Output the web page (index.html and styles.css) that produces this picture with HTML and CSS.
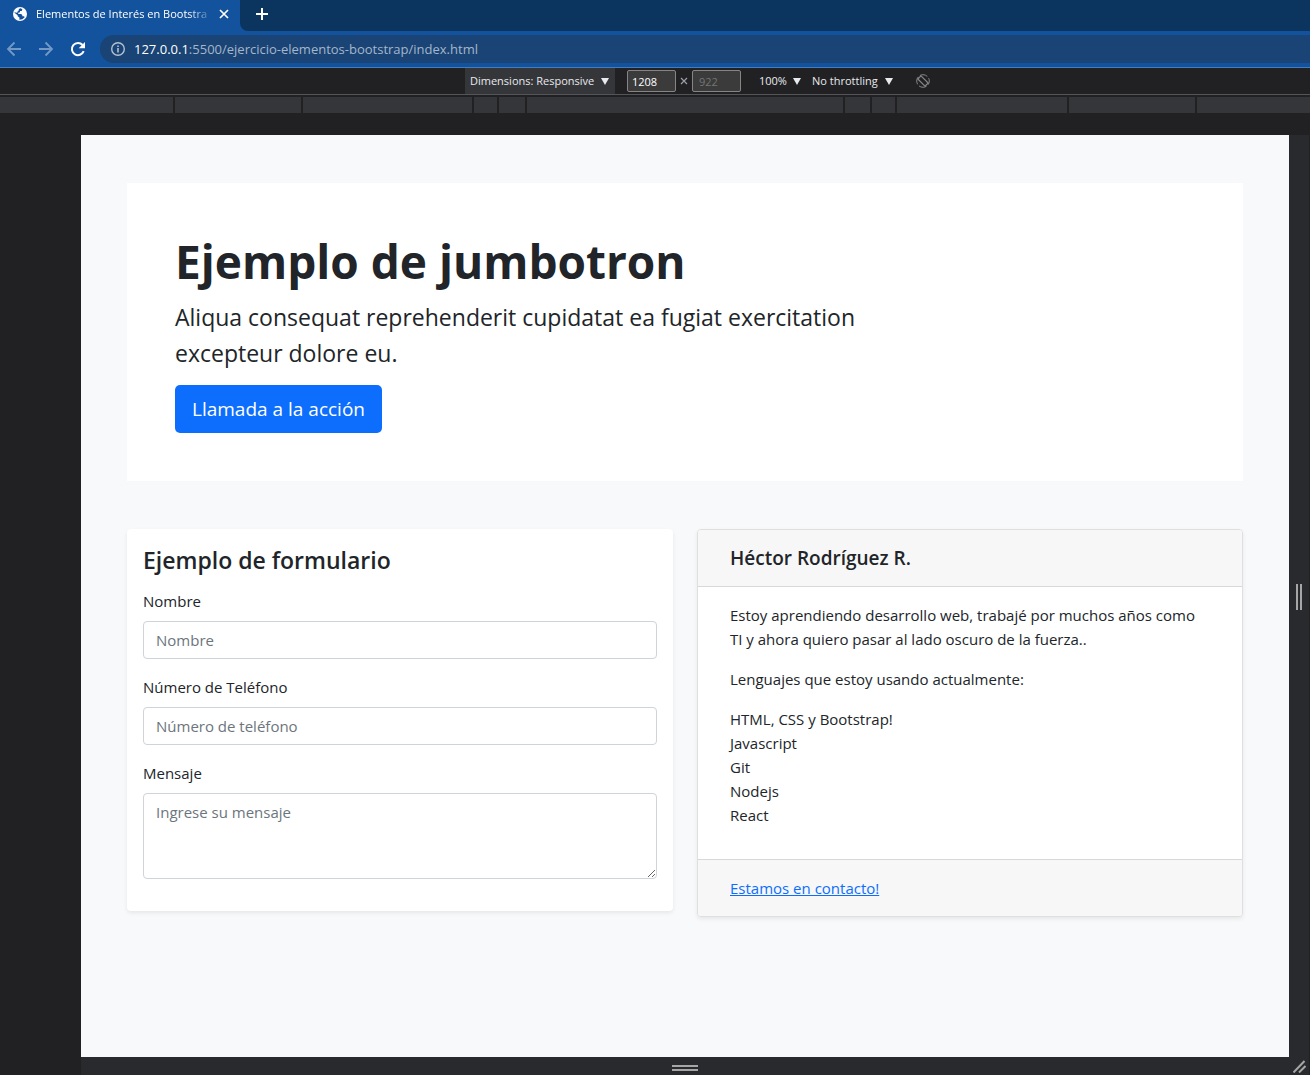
FILE: index.html
```html
<!DOCTYPE html>
<html lang="es">
<head>
  <meta charset="utf-8">
  <meta name="viewport" content="width=device-width, initial-scale=1">
  <title>Elementos de Interés en Bootstrap</title>
  <link rel="stylesheet" href="styles.css">
</head>
<body>
  <header class="browser">
    <div class="tabstrip">
      <div class="tab">
        <svg class="tab-icon" viewBox="0 0 24 24" aria-hidden="true"><circle cx="12" cy="12" r="12" fill="#fff"/><path d="M10 3.500 13 2 16 4 15 7 12 7 12 9 9 10 9 12 14 12 16 14 16 16 19 16 20 17.500 16 21 11 22 11 18 8 16 8 14 2.500 10 3 9 6 10 8 9 8 7 10 6Z" fill="#13529c"/></svg>
        <span class="tab-title">Elementos de Interés en Bootstra</span>
        <button class="icon-button tab-close" type="button" aria-label="Cerrar">
          <svg width="10" height="10" viewBox="0 0 10 10"><path d="M1 1 9 9M9 1 1 9" stroke="#fff" stroke-width="1.700"/></svg>
        </button>
      </div>
      <div class="strip">
        <button class="icon-button" type="button" aria-label="Nueva pestaña">
          <svg width="12" height="12" viewBox="0 0 12 12"><path d="M6 0V12M0 6H12" stroke="#fff" stroke-width="2"/></svg>
        </button>
      </div>
    </div>
    <div class="toolbar">
      <nav class="nav-buttons">
        <button class="icon-button" type="button" aria-label="Atrás">
          <svg width="16" height="16" viewBox="0 0 16 16"><path d="M15 8H2M8.500 1.500 2 8l6.500 6.500" fill="none" stroke="#739ac7" stroke-width="1.800"/></svg>
        </button>
        <button class="icon-button" type="button" aria-label="Adelante">
          <svg width="16" height="16" viewBox="0 0 16 16"><path d="M1 8H14M7.500 1.500 14 8l-6.500 6.500" fill="none" stroke="#739ac7" stroke-width="1.800"/></svg>
        </button>
        <button class="icon-button" type="button" aria-label="Recargar">
          <svg width="16" height="16" viewBox="0 0 16 16"><path d="M13.700 10.200A6.100 6.100 0 1 1 12.600 4" fill="none" stroke="#fff" stroke-width="2"/><path d="M15 1V7.300H8.700Z" fill="#fff"/></svg>
        </button>
      </nav>
      <div class="omnibox">
        <svg width="14" height="14" viewBox="0 0 14 14" aria-hidden="true"><circle cx="7" cy="7" r="6.300" fill="none" stroke="#b4c1d1" stroke-width="1.400"/><path d="M7 6V10.500M7 3.400V5" stroke="#b4c1d1" stroke-width="1.600"/></svg>
        <span class="url"><span class="host">127.0.0.1</span>:5500/ejercicio-elementos-bootstrap/index.html</span>
      </div>
    </div>
  </header>

  <div class="device-bar">
    <label class="picker picker-active"><select class="dimensions" aria-label="Dimensiones"><option>Dimensions: Responsive</option></select></label>
    <div class="size">
      <input class="size-input" type="text" value="1208" aria-label="Ancho">
      <svg width="8" height="8" viewBox="0 0 8 8" aria-hidden="true"><path d="M1 1 7 7M7 1 1 7" stroke="#9aa0a6" stroke-width="1.200"/></svg>
      <input class="size-input" type="text" value="922" aria-label="Alto" disabled>
    </div>
    <label class="picker"><select class="zoom" aria-label="Zoom"><option>100%</option></select></label>
    <label class="picker"><select class="throttle" aria-label="Red"><option>No throttling</option></select></label>
    <button class="icon-button rotate" type="button" aria-label="Girar">
      <svg width="14" height="14" viewBox="0 0 14 14"><g fill="none" stroke="#85868a"><circle cx="7" cy="7" r="6.300" stroke-dasharray="7.900 2" stroke-dashoffset="4"/><path d="M5 1.800 12.200 9 9 12.200 1.800 5Z" stroke-width="1.200"/></g></svg>
    </button>
  </div>

  <div class="ruler"><i></i><i></i><i></i><i></i><i></i><i></i><i></i><i></i><i></i><i></i><i></i></div>

  <div class="stage">
    <div class="viewport">
      <main class="container">
        <section class="jumbotron">
          <h1 class="jumbotron-title">Ejemplo de jumbotron</h1>
          <p class="jumbotron-text">Aliqua consequat reprehenderit cupidatat ea fugiat exercitation excepteur dolore eu.</p>
          <button class="cta" type="button">Llamada a la acción</button>
        </section>
        <div class="row">
          <form class="form-card">
            <h2 class="form-title">Ejemplo de formulario</h2>
            <div class="field">
              <label for="nombre">Nombre</label>
              <input class="control" id="nombre" type="text" placeholder="Nombre">
            </div>
            <div class="field">
              <label for="telefono">Número de Teléfono</label>
              <input class="control" id="telefono" type="tel" placeholder="Número de teléfono">
            </div>
            <div class="field">
              <label for="mensaje">Mensaje</label>
              <textarea class="control" id="mensaje" rows="3" placeholder="Ingrese su mensaje"></textarea>
            </div>
          </form>
          <article class="card">
            <h2 class="card-header">Héctor Rodríguez R.</h2>
            <div class="card-body">
              <p>Estoy aprendiendo desarrollo web, trabajé por muchos años como TI y ahora quiero pasar al lado oscuro de la fuerza..</p>
              <p>Lenguajes que estoy usando actualmente:</p>
              <ul>
                <li>HTML, CSS y Bootstrap!</li>
                <li>Javascript</li>
                <li>Git</li>
                <li>Nodejs</li>
                <li>React</li>
              </ul>
            </div>
            <footer class="card-footer"><a href="#">Estamos en contacto!</a></footer>
          </article>
        </div>
      </main>
    </div>
    <div class="handle handle-right"><svg width="6" height="26" viewBox="0 0 6 26"><path d="M1 0V26M5 0V26" stroke="#a5a6a5" stroke-width="2"/></svg></div>
    <div class="handle handle-bottom"><svg width="26" height="6" viewBox="0 0 26 6"><path d="M0 1H26M0 5H26" stroke="#a5a6a5" stroke-width="2"/></svg></div>
    <div class="handle handle-corner"><svg width="13" height="13" viewBox="0 0 13 13"><path d="M.5 12.500 11.500 1M6 12.500 12.500 6" stroke="#a5a6a5" stroke-width="2"/></svg></div>
  </div>
</body>
</html>
```
FILE: styles.css
```css
*, *::before, *::after {
  box-sizing: border-box;
}

body {
  display: flex;
  flex-direction: column;
  min-height: 100vh;
  margin: 0;
  background: #212123;
  color: #212529;
  font: 15px/24px "Open Sans", "Noto Sans", sans-serif;
}

h1, h2, p, ul {
  margin: 0;
}

button, input, select, textarea {
  font: inherit;
}

.icon-button {
  display: flex;
  align-items: center;
  justify-content: center;
  padding: 0;
  border: 0;
  background: none;
}

/* Browser window */
.browser {
  background: #13529c;
  border-bottom: 1px solid #457cba;
  color: #fff;
}

.tabstrip {
  display: flex;
  height: 31px;
  background: #13529c;
}

.tab {
  display: flex;
  align-items: center;
  width: 240px;
  padding: 0 10px 3px 13px;
  border-radius: 8px 8px 0 0;
}

.tab-icon {
  flex: none;
  width: 14px;
  height: 14px;
  margin-right: 9px;
}

.tab-title {
  flex: 1;
  font-size: 11px;
  white-space: nowrap;
  -webkit-mask-image: linear-gradient(to right, #000 152px, transparent 178px);
  mask-image: linear-gradient(to right, #000 152px, transparent 178px);
}

.tab-close {
  width: 12px;
  margin-left: 6px;
}

.strip {
  display: flex;
  flex: 1;
  align-items: center;
  padding: 0 16px 3px;
  border-bottom-left-radius: 8px;
  background: #0b355f;
}

.toolbar {
  display: flex;
  align-items: center;
  height: 36px;
}

.nav-buttons {
  display: flex;
  gap: 16px;
  padding: 0 14px 0 6px;
}

.omnibox {
  display: flex;
  flex: 1;
  align-items: center;
  gap: 9px;
  height: 28px;
  padding-left: 11px;
  border-radius: 14px 0 0 14px;
  background: #194475;
  color: #a6b6ca;
  font-size: 13px;
}

.host {
  color: #fff;
}

/* Device toolbar */
.device-bar {
  display: flex;
  align-items: center;
  justify-content: center;
  height: 27px;
  padding-left: 85px;
  border-bottom: 1px solid #545558;
  color: #e8eaed;
  font-size: 11px;
  line-height: 16px;
}

.picker {
  position: relative;
  display: flex;
  align-items: center;
  height: 26px;
}

.picker::after {
  position: absolute;
  right: 6px;
  border: 4px solid transparent;
  border-top: 7px solid #e8eaed;
  border-bottom: 0;
  content: "";
  pointer-events: none;
}

.picker-active {
  background: #35363a;
}

.picker select {
  height: 26px;
  padding: 0 5px;
  border: 0;
  background: none;
  color: inherit;
  appearance: none;
}

.dimensions {
  width: 150px;
}

.zoom {
  width: 53px;
}

.throttle {
  width: 92px;
}

.size {
  display: flex;
  align-items: center;
  gap: 4px;
  margin: 0 13px 0 12px;
}

.size-input {
  width: 49px;
  height: 22px;
  padding: 0 4px;
  border: 1px solid #858585;
  border-radius: 2px;
  background: #3b3b3b;
  color: #fff;
}

.size-input:disabled {
  padding-left: 6px;
  color: #757575;
}

.rotate {
  margin-left: 17px;
}

.ruler {
  display: grid;
  grid-template-columns: 173px 126px 169px 23px 26px 316px 25px 23px 170px 126px 1fr;
  gap: 2px;
  height: 18px;
  padding-top: 2px;
  overflow: hidden;
}

.ruler i {
  background: #35363a;
}

/* Emulated screen with its resize handles */
.stage {
  display: grid;
  flex: 1;
  grid-template-columns: 1fr 20px;
  grid-template-rows: 1fr 18px;
  padding: 22px 1px 0 81px;
}

.viewport {
  padding: 48px 46px;
  background: #f8f9fb;
}

.handle {
  display: flex;
  align-items: center;
  justify-content: center;
  background: #292a2d;
}

.handle-right {
  padding-top: 2px;
}

.handle-bottom {
  padding-top: 4px;
}

/* Page content */
.container {
  display: flex;
  flex-direction: column;
  gap: 48px;
}

.jumbotron {
  padding: 48px;
  background: #fff;
}

.jumbotron-title {
  margin-bottom: 8px;
  font-size: 46px;
  font-weight: 700;
  line-height: 60px;
}

.jumbotron-text {
  width: 67%;
  margin-bottom: 14px;
  font-size: 23px;
  line-height: 36px;
}

.cta {
  height: 48px;
  padding: 0 17px;
  border: 0;
  border-radius: 5px;
  background: #0d6efd;
  color: #fff;
  font-size: 19px;
}

.row {
  display: grid;
  grid-template-columns: 1fr 1fr;
  align-items: start;
  gap: 24px;
}

.form-card {
  padding: 16px;
  border-radius: 4px;
  background: #fff;
  box-shadow: 0 2px 4px rgba(0, 0, 0, 0.075);
}

.form-title {
  margin-bottom: 14px;
  font-size: 23px;
  font-weight: 600;
  line-height: 30px;
}

.field {
  display: flex;
  flex-direction: column;
  gap: 8px;
  margin-bottom: 16px;
}

.control {
  width: 100%;
  min-height: 38px;
  padding: 6px 12px;
  border: 1px solid #ced4da;
  border-radius: 4px;
  background: #fff;
  color: #212529;
}

.control::placeholder {
  color: #6c757d;
}

.card {
  overflow: hidden;
  border: 1px solid #dfdfdf;
  border-radius: 4px;
  background: #fff;
  box-shadow: 0 2px 4px rgba(0, 0, 0, 0.075);
}

.card-header {
  padding: 16px 32px;
  border-bottom: 1px solid #d8d8d8;
  background: #f7f7f7;
  font-size: 19px;
  font-weight: 600;
  line-height: 24px;
}

.card-body {
  padding: 16px 32px;
}

.card-body p,
.card-body ul {
  margin-bottom: 16px;
}

.card-body ul {
  padding: 0;
  list-style: none;
}

.card-footer {
  padding: 16px 32px;
  border-top: 1px solid #d8d8d8;
  background: #f7f7f7;
}

.card-footer a {
  color: #0d6efd;
}
```
